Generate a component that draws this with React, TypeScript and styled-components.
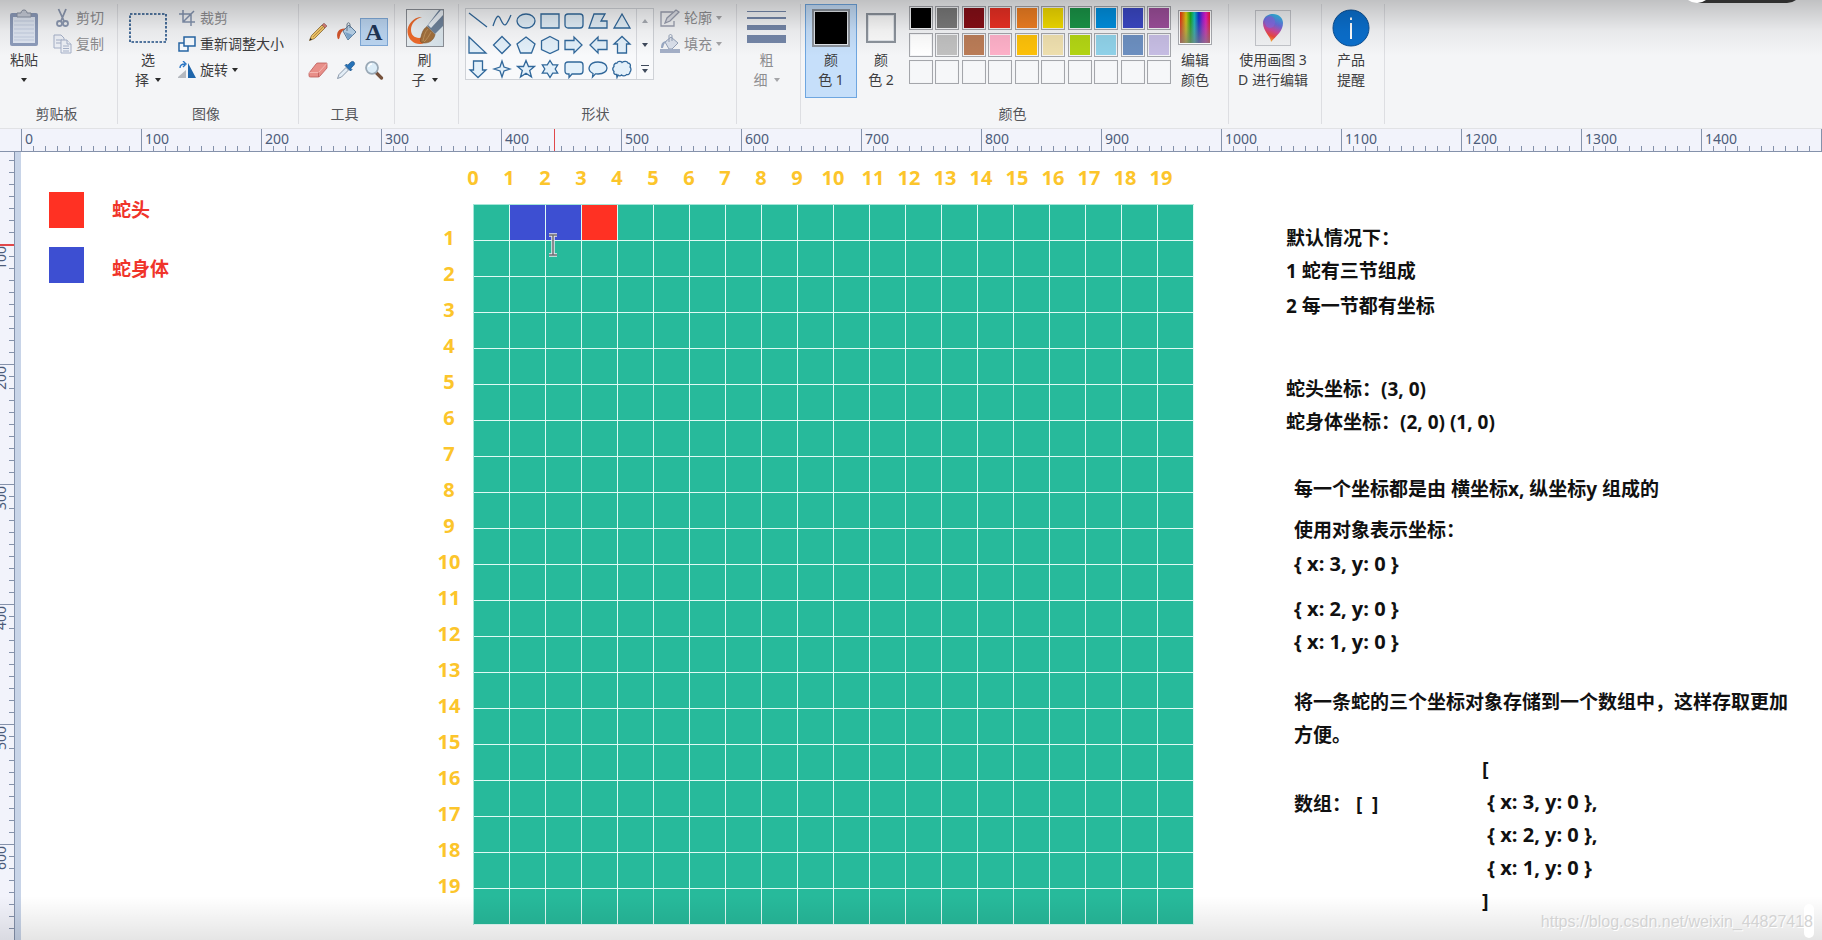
import React from "react";
import styled, { createGlobalStyle } from "styled-components";

const uiFont = '"Noto Sans", "Noto Sans CJK SC", sans-serif';
const ink = "#3d3d3f";
const faded = "#8d8d90";
const rulerInk = "#8592ab";

const GlobalStyle = createGlobalStyle`
  *, *::before, *::after { box-sizing: border-box; }
  body { margin: 0; background: #fff; font-family: ${uiFont}; }
  button { margin: 0; padding: 0; border: 0; background: none; color: inherit; font: inherit; }
  svg { display: block; flex: none; }
`;

const Page = styled.div`
  position: relative;
  display: flex;
  flex-direction: column;
  min-height: 100vh;
  overflow: hidden;
`;

/* ---------- ribbon ---------- */

const Ribbon = styled.header`
  display: flex;
  height: 129px;
  background: #f4f5f7;
  border-bottom: 1px solid #e1e2e5;
  font-size: 14px;
  line-height: 20px;
  color: ${ink};
`;

const Group = styled.section<{ $width: number }>`
  display: flex;
  flex-direction: column;
  flex: none;
  width: ${p => p.$width}px;
  margin: 4px 0;
  border-right: 1px solid #dddee2;
`;

const GroupBody = styled.div<{ $pad?: number; $gap?: number; $center?: boolean }>`
  display: flex;
  flex: 1;
  align-items: flex-start;
  gap: ${p => p.$gap ?? 0}px;
  padding: 0 ${p => (p.$center ? 4 : 0)}px 0 ${p => p.$pad ?? 0}px;
  justify-content: ${p => (p.$center ? "center" : "flex-start")};
`;

const GroupTitle = styled.h2`
  margin: 0;
  padding-right: 4px;
  height: 20px;
  font-size: 14px;
  font-weight: 400;
  line-height: 20px;
  text-align: center;
  color: #55565a;
`;

const BigButton = styled.button<{ $width: number; $disabled?: boolean; $selected?: boolean }>`
  display: flex;
  flex-direction: column;
  align-items: center;
  width: ${p => p.$width}px;
  height: 94px;
  border: 1px solid ${p => (p.$selected ? "#6ea6e0" : "transparent")};
  background: ${p => (p.$selected ? "#c6dffa" : "transparent")};
  color: ${p => (p.$disabled ? faded : ink)};
`;

const IconSlot = styled.span`
  display: flex;
  align-items: center;
  justify-content: center;
  height: 45px;
`;

const LabelLine = styled.span`
  display: flex;
  align-items: center;
  gap: 6px;
  height: 20px;
  white-space: pre;
`;

const Caret = styled.span<{ $disabled?: boolean }>`
  border: 3px solid transparent;
  border-top: 4px solid ${p => (p.$disabled ? "#a5a5a8" : "#2b2b2b")};
  border-bottom: 0;
`;

const SmallColumn = styled.div`
  display: flex;
  flex-direction: column;
  align-items: flex-start;
  gap: 6px;
  padding-top: 4px;
`;

const SmallButton = styled.button<{ $disabled?: boolean }>`
  display: flex;
  align-items: center;
  gap: 4px;
  height: 20px;
  white-space: nowrap;
  color: ${p => (p.$disabled ? faded : ink)};
`;

const ToolGrid = styled.div`
  display: grid;
  grid-template-columns: repeat(3, 28px);
  grid-auto-rows: 28px;
  row-gap: 10px;
  padding-top: 14px;
`;

const ToolButton = styled.button<{ $selected?: boolean }>`
  display: flex;
  align-items: center;
  justify-content: center;
  border: 1px solid ${p => (p.$selected ? "#7fa9d8" : "transparent")};
  background: ${p => (p.$selected ? "#bcd6f2" : "transparent")};
  font: 700 24px/24px "Liberation Serif", serif;
  color: #1f3556;
`;

const ShapeBox = styled.div`
  display: flex;
  width: 189px;
  height: 72px;
  margin-top: 4px;
  border: 1px solid #cfd2d7;
  background: #f8f9fb;
`;

const ShapeGrid = styled.div`
  display: grid;
  grid-template-columns: repeat(7, 24px);
  grid-auto-rows: 24px;
  flex: 1;
  border-right: 1px solid #d9dbe0;
`;

const ShapeButton = styled.button`
  display: flex;
  align-items: center;
  justify-content: center;
`;

const ShapeScroll = styled.div`
  display: grid;
  grid-template-rows: repeat(3, 24px);
  width: 16px;
`;

const ColorWell = styled.span<{ $color: string; $size: number }>`
  width: ${p => p.$size}px;
  height: ${p => p.$size}px;
  border: 2px solid #8c939c;
  background: ${p => p.$color};
  box-shadow: inset 0 0 0 1px #dfe3e8;
`;

const Palette = styled.div`
  display: grid;
  grid-template-columns: repeat(10, 24px);
  grid-template-rows: repeat(3, 24px);
  justify-content: space-between;
  row-gap: 3px;
  width: 262px;
  margin: 2px 4px 0 4px;
`;

const Swatch = styled.button<{ $color: string }>`
  border: 1px solid #a4a6ab;
  background: ${p => p.$color};
  box-shadow: inset 0 0 0 1px #f3f4f6;
`;

const Spectrum = styled.span`
  width: 34px;
  height: 35px;
  border: 1px solid #a9abb0;
  box-shadow: inset 0 0 0 1px #fff;
  background:
    linear-gradient(rgba(128, 128, 128, 0) 20%, rgba(128, 128, 128, 0.75)),
    linear-gradient(90deg, #f03c14 5%, #e6d214 22%, #1eb41e 36%, #14c8c8 48%, #1432dc 62%, #a01edc 74%, #f01ec8 84%, #f01e3c 96%);
`;

const PaintFrame = styled.span`
  display: flex;
  align-items: center;
  justify-content: center;
  width: 36px;
  height: 36px;
  border: 1px solid #c3c5ca;
  background: #f1f2f4;
`;

/* ---------- rulers ---------- */

const TopRuler = styled.div`
  position: relative;
  display: flex;
  height: 23px;
  padding-left: 21px;
  overflow: hidden;
  background: #f2f3fb;
  border-bottom: 1px solid ${rulerInk};
`;

const TopUnit = styled.div`
  flex: none;
  width: 120px;
  padding-left: 3px;
  border-left: 1px solid ${rulerInk};
  background: repeating-linear-gradient(90deg, transparent 0 11px, ${rulerInk} 11px 12px) 0 100% / 100% 5px no-repeat;
  font-size: 14px;
  line-height: 20px;
  color: #4d5c7a;
`;

const SideRuler = styled.div`
  position: relative;
  display: flex;
  flex-direction: column;
  flex: none;
  width: 15px;
  overflow: hidden;
  background: #f2f3fb;
  border-right: 1px solid ${rulerInk};
`;

const SideUnit = styled.div<{ $length?: number }>`
  display: flex;
  justify-content: flex-end;
  flex: ${p => (p.$length ? `0 0 ${p.$length}px` : "1 1 0")};
  padding: 1px 6px 0 0;
  border-top: 1px solid ${p => (p.$length === 92 ? "transparent" : rulerInk)};
  background: repeating-linear-gradient(
      ${p => (p.$length === 92 ? "0deg" : "180deg")},
      transparent 0 11px,
      ${rulerInk} 11px 12px
    ) 100% 0 / 5px 100% no-repeat;
`;

const SideNumber = styled.span`
  flex: none;
  height: 26px;
  writing-mode: vertical-rl;
  transform: rotate(180deg);
  font-size: 14px;
  line-height: 14px;
  text-align: right;
  color: #4d5c7a;
`;

const Marker = styled.span<{ $vertical?: boolean }>`
  position: absolute;
  background: #e0474a;
  ${p => (p.$vertical ? "left: 0; right: 0; top: 92px; height: 2px;" : "top: 0; bottom: 0; left: 554px; width: 1px;")}
`;

/* ---------- canvas ---------- */

const Workspace = styled.div`
  display: flex;
  flex: 1;
`;

const Gutter = styled.div`
  flex: none;
  width: 6px;
  background: #c8d4e8;
`;

const Canvas = styled.main`
  position: relative;
  display: grid;
  grid-template-columns: minmax(150px, 404px) auto minmax(0, 1fr);
  flex: 1;
  padding: 14px 20px 15px 0;
  background: #fff;
`;

const Legend = styled.div`
  display: flex;
  gap: 28px;
  padding: 26px 0 0 28px;
`;

const LegendColumn = styled.div<{ $gap: number }>`
  display: flex;
  flex-direction: column;
  gap: ${p => p.$gap}px;
  font-size: 19px;
  font-weight: 700;
  line-height: 36px;
  color: #f0342a;
`;

const Block = styled.span<{ $color: string }>`
  width: 35px;
  height: 36px;
  background: ${p => p.$color};
`;

const BoardArea = styled.div`
  display: grid;
  grid-template-columns: 48px auto;
  align-content: start;
  font-size: 20px;
  font-weight: 700;
  text-align: center;
  color: #fcc52b;
`;

const ColumnNumbers = styled.div`
  grid-column: 1 / -1;
  display: flex;
  gap: 4px;
  margin: 0 0 14px 30px;
  line-height: 24px;
`;

const NumberRun = styled.div`
  display: grid;
  grid-auto-flow: column;
  grid-auto-columns: 36px;
`;

const RowNumbers = styled.div`
  display: grid;
  grid-auto-rows: 36px;
  align-content: start;
  padding-top: 16px;
  line-height: 36px;
`;

const Board = styled.div`
  display: grid;
  grid-template-columns: repeat(20, 36px);
  grid-auto-rows: 36px;
  border: solid #a4e6d8;
  border-width: 1px 0 0 1px;
`;

const Cell = styled.span<{ $color: string }>`
  border: solid #dffaf4;
  border-width: 0 1px 1px 0;
  background: ${p => p.$color};
`;

const Notes = styled.div`
  padding: 56px 0 0 92px;
  font-size: 19px;
  font-weight: 700;
  line-height: 33px;
  color: #111;
`;

const Note = styled.p<{ $top?: number; $indent?: boolean }>`
  margin: ${p => p.$top ?? 0}px 0 0 ${p => (p.$indent ? 8 : 0)}px;
  white-space: pre-line;
`;

const Code = styled.pre<{ $top?: number }>`
  margin: ${p => p.$top ?? 0}px 0 0 8px;
  font-family: "Open Sans", ${uiFont};
  font-size: 20px;
`;

const ArrayRow = styled.div`
  display: grid;
  grid-template-columns: 188px auto;
  justify-content: start;
`;

const ArrayLabel = styled.p`
  margin: 0 0 0 8px;
  padding-top: 36px;
  white-space: pre;
`;

/* ---------- overlays ---------- */

const TextCursor = styled.svg`
  position: absolute;
  left: 526px;
  top: 81px;
`;

const TopShade = styled.div`
  position: absolute;
  inset: 0 0 auto 0;
  height: 56px;
  pointer-events: none;
  background: linear-gradient(rgba(0, 0, 0, 0.21), rgba(0, 0, 0, 0.05) 55%, transparent);
`;

const BottomShade = styled.div`
  position: absolute;
  inset: auto 0 0 0;
  height: 44px;
  pointer-events: none;
  background: linear-gradient(transparent, rgba(0, 0, 0, 0.1));
`;

const Pill = styled.div`
  position: absolute;
  top: -27px;
  right: 20px;
  width: 116px;
  height: 30px;
  border-radius: 15px;
  background: #2f2f2f;
`;

const PillKnob = styled.div`
  position: absolute;
  left: -4px;
  top: 0;
  width: 30px;
  height: 30px;
  border-radius: 15px;
  background: #fff;
`;

const ScrollHint = styled.div`
  position: absolute;
  right: 8px;
  bottom: 2px;
  width: 10px;
  height: 34px;
  border-radius: 5px;
  background: #fff;
`;

const Watermark = styled.a`
  position: absolute;
  right: 9px;
  bottom: 8px;
  font: 16px/20px "Liberation Sans", sans-serif;
  color: #d3d3d3;
  text-decoration: none;
  text-shadow: 1px 1px 0 #fff;
`;

/* ---------- icons ---------- */

const PasteIcon = () => (
  <svg width="30" height="38" viewBox="0 0 30 38">
    <rect x="1" y="4" width="28" height="33" rx="2" fill="#8d9cbb" />
    <rect x="4" y="8" width="22" height="26" fill="#dfe6f2" />
    <path d="M5 12h20M5 16h20M5 20h20M5 24h20M5 28h20M5 31h20" stroke="#c3cde0" />
    <path d="M8 8V4h4c0-4 6-4 6 0h4v4z" fill="#c9cfdb" stroke="#8b94a6" />
  </svg>
);

const CutIcon = () => (
  <svg width="19" height="20" viewBox="0 0 19 20" fill="none" stroke="#8e9ab3" strokeWidth="1.8">
    <path d="M5.500 1l5.500 12M13 1L8 13" />
    <circle cx="6.500" cy="15.500" r="2.500" />
    <circle cx="12.500" cy="15.500" r="2.500" />
  </svg>
);

const CopyIcon = () => (
  <svg width="19" height="20" viewBox="0 0 19 20" fill="#eef1f7" stroke="#a5b0c8">
    <path d="M1 1h7l3 3v10H1z" />
    <path d="M3 6h6M3 9h6" />
    <path d="M8 6h6l4 4v9H8z" />
    <path d="M14 6v4h4M10 12h6M10 14.500h6M10 17h6" />
  </svg>
);

const SelectIcon = () => (
  <svg width="38" height="30" viewBox="0 0 38 30">
    <rect x="1" y="1" width="36" height="28" fill="none" stroke="#1f4f86" strokeWidth="1.6" strokeDasharray="2.500 1.500" />
  </svg>
);

const CropIcon = () => (
  <svg width="18" height="18" viewBox="0 0 18 18" fill="none" stroke="#8494b0" strokeWidth="1.5">
    <path d="M5 1v12h12M1 5h12v12M5 13L16 2" />
  </svg>
);

const ResizeIcon = () => (
  <svg width="18" height="18" viewBox="0 0 18 18" fill="#f7fbff" stroke="#2767a6" strokeWidth="1.5">
    <path d="M1 8h9v8H1z" />
    <path d="M6 2h11v9H6z" />
  </svg>
);

const RotateIcon = () => (
  <svg width="18" height="18" viewBox="1 0 18 18">
    <path d="M0 17l9-8v8z" fill="#b5b9bf" />
    <path d="M11 17V2l8 15z" fill="#1f66ab" />
    <path d="M3 7c0-3 2-4 5-4M6 0l3 3-3 3" fill="none" stroke="#2a76c4" strokeWidth="1.4" />
  </svg>
);

const PencilIcon = () => (
  <svg width="20" height="20" viewBox="0 0 20 20">
    <path d="M1.500 18.500l2-5L14 3l3 3L6.500 16.500z" fill="#f1c76a" stroke="#8c6a34" strokeWidth="0.8" />
    <path d="M14 3l2-1.800 3 2.800-2 2z" fill="#d98079" stroke="#8b5550" strokeWidth="0.6" />
    <path d="M1.500 18.500l1-2.500 1.500 1.500z" fill="#222" />
    <path d="M5 15L15.500 4.500" stroke="#b8853a" strokeWidth="0.8" />
  </svg>
);

const BucketIcon = () => (
  <svg width="21" height="20" viewBox="0 0 21 20">
    <path d="M7 9l6-6 7 7-8 8z" fill="#b9d3ea" stroke="#5d7f9f" />
    <path d="M9 10l8 3-5 4.500z" fill="#7fa8cf" />
    <path d="M11 9V3c0-3 3-3 3 0v3" fill="none" stroke="#6c7d8e" />
    <path d="M1.500 16C0 10 3 6 9.500 6.500 6 9 4.500 11 3.500 16c-.5 1.500-1.700 1.500-2 0z" fill="#d4552c" />
  </svg>
);

const EraserIcon = () => (
  <svg width="20" height="20" viewBox="0 0 20 20" stroke="#bb5b59" strokeWidth="0.8">
    <path d="M1 13l7-9c.6-.8 1-1 2-1h8c1 0 1.400.6 1 1.400V8l-7 8c-.6.800-1 1-2 1H2.500C1.400 17 1 16.500 1 15.500z" fill="#e88f89" />
    <path d="M1 13.500c0-.5.300-1 1-1h8.500L18.800 3.500" fill="none" stroke="#f6c0bb" />
    <path d="M10.500 12.500V17" fill="none" />
  </svg>
);

const DropperIcon = () => (
  <svg width="20" height="20" viewBox="0 0 20 20">
    <path d="M1.500 18.500l1.500-4 7-7 2.500 2.500-7 7z" fill="#e3edf6" stroke="#7f8fa1" strokeWidth="0.900" />
    <path d="M9 5.500l5.500 5.500 1.500-1.500-1.200-1.200 3-3C20 3 17 0 14.700 2.200l-3 3L10.500 4z" fill="#2672b8" stroke="#174d82" strokeWidth="0.700" />
  </svg>
);

const LensIcon = () => (
  <svg width="20" height="20" viewBox="0 0 20 20">
    <path d="M12 12.500l5.500 5.500" stroke="#76513c" strokeWidth="3.200" strokeLinecap="round" />
    <circle cx="8" cy="7.800" r="6" fill="#dcedf8" stroke="#9aa9b6" strokeWidth="1.800" />
    <path d="M4.500 7c.5-2 1.700-3 3.500-3" stroke="#fff" strokeWidth="1.400" fill="none" />
  </svg>
);

const BrushIcon = () => (
  <svg width="38" height="38" viewBox="0 0 38 38">
    <defs>
      <linearGradient id="brush-back" x2="1" y2="1">
        <stop offset="0" stopColor="#fafafa" />
        <stop offset="1" stopColor="#d5e2ea" />
      </linearGradient>
    </defs>
    <rect x="0.500" y="0.500" width="37" height="37" fill="url(#brush-back)" stroke="#8b8f96" />
    <path d="M16 8C7 8 1 16 1.500 23c.7 8 7 12.500 13 12 2.500-.2 4-1.500 4.500-3.500l-3-3C10 30 5 27 5 21c0-6 4-11 11-13z" fill="#ee6a2b" />
    <path d="M37 2v15l-8 8-8-8L33 1h3z" fill="#6f839b" />
    <path d="M35 1L22 16l3 3L37 6V2z" fill="#e8eef4" />
    <path d="M21 17.500l8 8c-1 5-5 9-12 8.500-2-.1-3-1.500-2.500-3.500 1-5 2-10 6.500-13z" fill="#a3713d" stroke="#7b5028" strokeWidth="0.600" />
    <path d="M22 20c-3 3-4 7-5 12M25 23c-2 4-4 7-7 10" fill="none" stroke="#c79a63" strokeWidth="0.800" />
  </svg>
);

const outlines: React.ReactNode[] = [
  <path d="M1 2l18 14" fill="none" />,
  <path d="M1 15C4 6 6 3 8 7s4 10 7 5c2-3 3-6 4-8" fill="none" />,
  <ellipse cx="10" cy="10" rx="9" ry="7" />,
  <path d="M1 3h18v14H1z" />,
  <rect x="1" y="3" width="18" height="14" rx="3" />,
  <path d="M6 3h11l-4 7h6v7H1z" />,
  <path d="M10 3l8 14H2z" />,
  <path d="M1 2l17 16H1z" />,
  <path d="M10 1.500l8.500 8.500L10 18.500 1.500 10z" />,
  <path d="M10 2l9 7-3.500 9h-11L1 9z" />,
  <path d="M10 1.500L18.500 6v8.500L10 18.500 1.500 14.500V6z" />,
  <path d="M1 5.500h9V2l8 8-8 8v-3.500H1z" />,
  <path d="M19 5.500h-9V2l-8 8 8 8v-3.500h9z" />,
  <path d="M5.500 18v-9H2l8-7.500L18 9h-3.500v9z" />,
  <path d="M5.500 2v9H2l8 7.500 8-7.500h-3.500V2z" />,
  <path d="M10 2l2 6 6 2-6 2-2 6-2-6-6-2 6-2z" />,
  <path d="M10 1.500l2.500 6h6L13.700 11.500l1.800 6.500L10 14.200 4.500 18l1.800-6.500L1.500 7.500h6z" />,
  <path d="M10 1.500l2.700 4.300h5L15.200 10l2.500 4.200h-5L10 18.500l-2.700-4.300h-5L4.800 10 2.300 5.800h5z" />,
  <path d="M4 3h12q3 0 3 3v6q0 3-3 3H8l-3 3.500V15H4q-3 0-3-3V6q0-3 3-3z" />,
  <path d="M4.500 18l.5-3.500C-2 11 1 3 10 3c12 0 12 12 0 12-1.500 0-2-.2-2.500-.2z" />,
  <path d="M5 4c1-2 4-2 5-.5C12 2 15 2 16 4c2 0 3 2 2 4 1.500 1.500 1 4 0 5 0 2-2 3-3.500 2.500-1 2-4 1.500-5 .5-1 1-2.500 1-3.500 0L5 18.500l-.5-3C2 15.500 1.500 14 2 12.500.5 11 .5 9 2 7.500 1.500 5.500 3 4 5 4z" />,
];

const shapeNames = [
  "直线", "曲线", "椭圆", "矩形", "圆角矩形", "多边形", "三角形",
  "直角三角形", "菱形", "五边形", "六边形", "右箭头", "左箭头", "上箭头",
  "下箭头", "四角星", "五角星", "六角星", "圆角标注", "椭圆标注", "云形标注",
];

const OutlineIcon = () => (
  <svg width="20" height="18" viewBox="0 0 20 18" fill="none" stroke="#9a9fb0" strokeWidth="1.300">
    <path d="M13 3H1v14h13v-5" />
    <path d="M5 14l2-5 9-8 3 2-9 9z" fill="#dfe1e8" />
  </svg>
);

const FillIcon = () => (
  <svg width="20" height="20" viewBox="0 0 20 20">
    <path d="M5 8l6-5 7 6-6 6H9z" fill="#dbe1ec" stroke="#94a1b8" />
    <path d="M9 8V2c0-2 3-2 3 0v5" fill="none" stroke="#94a1b8" />
    <path d="M1 14C1 9 3 7 7 7c-3 2-3 4-4 7z" fill="#9aa9c4" />
    <path d="M0 15h20v4H0z" fill="#a3afc7" />
  </svg>
);

const ThicknessIcon = () => (
  <svg width="39" height="36" viewBox="0 0 39 36" fill="#7486a8">
    <path d="M0 1h39v1H0zM0 7h39v2H0zM0 15h39v5H0zM0 25h39v8H0z" />
  </svg>
);

const Paint3DIcon = () => (
  <svg width="20" height="30" viewBox="0 0 20 30">
    <defs>
      <linearGradient id="drop" x1="0.700" y1="0" x2="0.400" y2="1">
        <stop offset="0" stopColor="#2cc3ea" />
        <stop offset="0.350" stopColor="#6c6fe0" />
        <stop offset="0.600" stopColor="#d0489c" />
        <stop offset="0.800" stopColor="#ee4a3c" />
        <stop offset="1" stopColor="#f8b531" />
      </linearGradient>
    </defs>
    <path d="M10 1c6 0 10 4 10 9 0 8-6 12-12 19C8 24 0 18 0 10c0-5 4-9 10-9z" fill="url(#drop)" />
    <ellipse cx="7" cy="9" rx="5" ry="6" fill="#8a6be6" opacity="0.700" />
  </svg>
);

const InfoIcon = () => (
  <svg width="38" height="38" viewBox="0 0 38 38">
    <circle cx="19" cy="19" r="18" fill="#0a6fcd" stroke="#0c4f93" />
    <path d="M19 14v16M19 8.500v2.500" stroke="#fff" strokeWidth="2" />
  </svg>
);

/* ---------- data ---------- */

const paletteColors = [
  "#000000", "#7a7a7a", "#870f17", "#ec3024", "#f07f22", "#f3dc00", "#1a9648", "#0090e0", "#3b48c6", "#9d4f9b",
  "#ffffff", "#c0c0c0", "#ba7c57", "#fdb0c8", "#fcc009", "#eedfae", "#b2d414", "#8fd1e8", "#6c8fc0", "#c6bde3",
  ...Array<string>(10).fill("#f6f7f9"),
];

const snake: Record<number, string> = { 1: "#3d4fd2", 2: "#3d4fd2", 3: "#ff3123" };
const cells = Array.from({ length: 400 }, (_, i) => snake[i] ?? "#27ba9b");
const columns = Array.from({ length: 20 }, (_, i) => i);
const topUnits = Array.from({ length: 16 }, (_, i) => i * 100);
const sideUnits = [100, 200, 300, 400, 500];

const arrayText = `[
 { x: 3, y: 0 },
 { x: 2, y: 0 },
 { x: 1, y: 0 }
]`;

type BigProps = {
  icon: React.ReactNode;
  lines: [string, string];
  width: number;
  caret?: boolean;
  disabled?: boolean;
  selected?: boolean;
};

const Big = ({ icon, lines, width, caret, disabled, selected }: BigProps) => (
  <BigButton type="button" $width={width} $disabled={disabled} $selected={selected}>
    <IconSlot>{icon}</IconSlot>
    <LabelLine>{lines[0]}</LabelLine>
    <LabelLine>
      {lines[1]}
      {caret && <Caret $disabled={disabled} />}
    </LabelLine>
  </BigButton>
);

export default function App() {
  return (
    <Page>
      <GlobalStyle />
      <Ribbon>
        <Group $width={118}>
          <GroupBody $gap={5}>
            <Big icon={<PasteIcon />} lines={["粘贴", ""]} width={48} caret />
            <SmallColumn>
              <SmallButton type="button" $disabled><CutIcon />剪切</SmallButton>
              <SmallButton type="button" $disabled><CopyIcon />复制</SmallButton>
            </SmallColumn>
          </GroupBody>
          <GroupTitle>剪贴板</GroupTitle>
        </Group>
        <Group $width={181}>
          <GroupBody $pad={6} $gap={6}>
            <Big icon={<SelectIcon />} lines={["选", "择"]} width={48} caret />
            <SmallColumn>
              <SmallButton type="button" $disabled><CropIcon />裁剪</SmallButton>
              <SmallButton type="button"><ResizeIcon />重新调整大小</SmallButton>
              <SmallButton type="button"><RotateIcon />旋转 <Caret /></SmallButton>
            </SmallColumn>
          </GroupBody>
          <GroupTitle>图像</GroupTitle>
        </Group>
        <Group $width={96}>
          <GroupBody $pad={5}>
            <ToolGrid>
              <ToolButton type="button" aria-label="铅笔"><PencilIcon /></ToolButton>
              <ToolButton type="button" aria-label="用颜色填充"><BucketIcon /></ToolButton>
              <ToolButton type="button" $selected>A</ToolButton>
              <ToolButton type="button" aria-label="橡皮擦"><EraserIcon /></ToolButton>
              <ToolButton type="button" aria-label="颜色选取器"><DropperIcon /></ToolButton>
              <ToolButton type="button" aria-label="放大镜"><LensIcon /></ToolButton>
            </ToolGrid>
          </GroupBody>
          <GroupTitle>工具</GroupTitle>
        </Group>
        <Group $width={64}>
          <GroupBody $center>
            <Big icon={<BrushIcon />} lines={["刷", "子"]} width={48} caret />
          </GroupBody>
        </Group>
        <Group $width={278}>
          <GroupBody $pad={6} $gap={6}>
            <ShapeBox>
              <ShapeGrid>
                {outlines.map((shape, i) => (
                  <ShapeButton type="button" key={shapeNames[i]} aria-label={shapeNames[i]}>
                    <svg width="20" height="20" viewBox="0 0 20 20" fill="#e3f0fa" stroke="#31689b" strokeWidth="1.300">
                      {shape}
                    </svg>
                  </ShapeButton>
                ))}
              </ShapeGrid>
              <ShapeScroll>
                <ShapeButton type="button" aria-label="向上">
                  <svg width="8" height="5" viewBox="0 0 8 5"><path d="M4 0l3 4H1z" fill="#a9adb5" /></svg>
                </ShapeButton>
                <ShapeButton type="button" aria-label="向下">
                  <svg width="8" height="5" viewBox="0 0 8 5"><path d="M1 0h6L4 4z" fill="#3f4a5c" /></svg>
                </ShapeButton>
                <ShapeButton type="button" aria-label="更多">
                  <svg width="8" height="9" viewBox="0 0 8 9"><path d="M0 0h8v1H0zM1 4h6L4 8z" fill="#3f4a5c" /></svg>
                </ShapeButton>
              </ShapeScroll>
            </ShapeBox>
            <SmallColumn>
              <SmallButton type="button" $disabled><OutlineIcon />轮廓 <Caret $disabled /></SmallButton>
              <SmallButton type="button" $disabled><FillIcon />填充 <Caret $disabled /></SmallButton>
            </SmallColumn>
          </GroupBody>
          <GroupTitle>形状</GroupTitle>
        </Group>
        <Group $width={64}>
          <GroupBody $center>
            <Big icon={<ThicknessIcon />} lines={["粗", "细"]} width={48} caret disabled />
          </GroupBody>
        </Group>
        <Group $width={428}>
          <GroupBody $pad={4}>
            <Big icon={<ColorWell $color="#000" $size={38} />} lines={["颜", "色 1"]} width={52} selected />
            <Big icon={<ColorWell $color="#fbfbfb" $size={30} />} lines={["颜", "色 2"]} width={48} />
            <Palette>
              {paletteColors.map((color, i) => (
                <Swatch type="button" key={i} $color={color} aria-label={`调色板 ${i + 1}`} />
              ))}
            </Palette>
            <Big icon={<Spectrum />} lines={["编辑", "颜色"]} width={40} />
          </GroupBody>
          <GroupTitle>颜色</GroupTitle>
        </Group>
        <Group $width={93}>
          <GroupBody $center>
            <Big icon={<PaintFrame><Paint3DIcon /></PaintFrame>} lines={["使用画图 3", "D 进行编辑"]} width={84} />
          </GroupBody>
        </Group>
        <Group $width={63}>
          <GroupBody $center>
            <Big icon={<InfoIcon />} lines={["产品", "提醒"]} width={56} />
          </GroupBody>
        </Group>
      </Ribbon>

      <TopRuler>
        {topUnits.map(n => (
          <TopUnit key={n}>{n < 1500 && n}</TopUnit>
        ))}
        <Marker />
      </TopRuler>

      <Workspace>
        <SideRuler>
          <SideUnit $length={92} />
          {sideUnits.map(n => (
            <SideUnit key={n} $length={120}><SideNumber>{n}</SideNumber></SideUnit>
          ))}
          <SideUnit><SideNumber>600</SideNumber></SideUnit>
          <Marker $vertical />
        </SideRuler>
        <Gutter />
        <Canvas>
          <Legend>
            <LegendColumn $gap={19}>
              <Block $color="#ff3123" />
              <Block $color="#3d4fd2" />
            </LegendColumn>
            <LegendColumn $gap={23}>
              <span>蛇头</span>
              <span>蛇身体</span>
            </LegendColumn>
          </Legend>

          <BoardArea>
            <ColumnNumbers>
              <NumberRun>{columns.slice(0, 11).map(n => <span key={n}>{n}</span>)}</NumberRun>
              <NumberRun>{columns.slice(11).map(n => <span key={n}>{n}</span>)}</NumberRun>
            </ColumnNumbers>
            <RowNumbers>{columns.slice(1).map(n => <span key={n}>{n}</span>)}</RowNumbers>
            <Board>{cells.map((color, i) => <Cell key={i} $color={color} />)}</Board>
          </BoardArea>

          <Notes>
            <Note>{"默认情况下：\n1 蛇有三节组成"}</Note>
            <Note $top={2}>2 每一节都有坐标</Note>
            <Note $top={50}>{"蛇头坐标：(3, 0)\n蛇身体坐标：(2, 0) (1, 0)"}</Note>
            <Note $top={34} $indent>每一个坐标都是由 横坐标x, 纵坐标y 组成的</Note>
            <Note $top={8} $indent>使用对象表示坐标：</Note>
            <Code>{"{ x: 3, y: 0 }"}</Code>
            <Code $top={12}>{"{ x: 2, y: 0 }\n{ x: 1, y: 0 }"}</Code>
            <Note $top={28} $indent>将一条蛇的三个坐标对象存储到一个数组中，这样存取更加方便。</Note>
            <ArrayRow>
              <ArrayLabel>{"数组： [  ]"}</ArrayLabel>
              <Code>{arrayText}</Code>
            </ArrayRow>
          </Notes>

          <TextCursor width="12" height="24" viewBox="0 0 12 24">
            <path d="M2 2h8M6 2v20M2 22h8" fill="none" stroke="#e9e9ee" strokeWidth="3.500" />
            <path d="M2 2h8M6 2v20M2 22h8" fill="none" stroke="#6c6c72" strokeWidth="1.500" />
          </TextCursor>
        </Canvas>
      </Workspace>

      <TopShade />
      <BottomShade />
      <Pill><PillKnob /></Pill>
      <ScrollHint />
      <Watermark href="https://blog.csdn.net/weixin_44827418">https://blog.csdn.net/weixin_44827418</Watermark>
    </Page>
  );
}
